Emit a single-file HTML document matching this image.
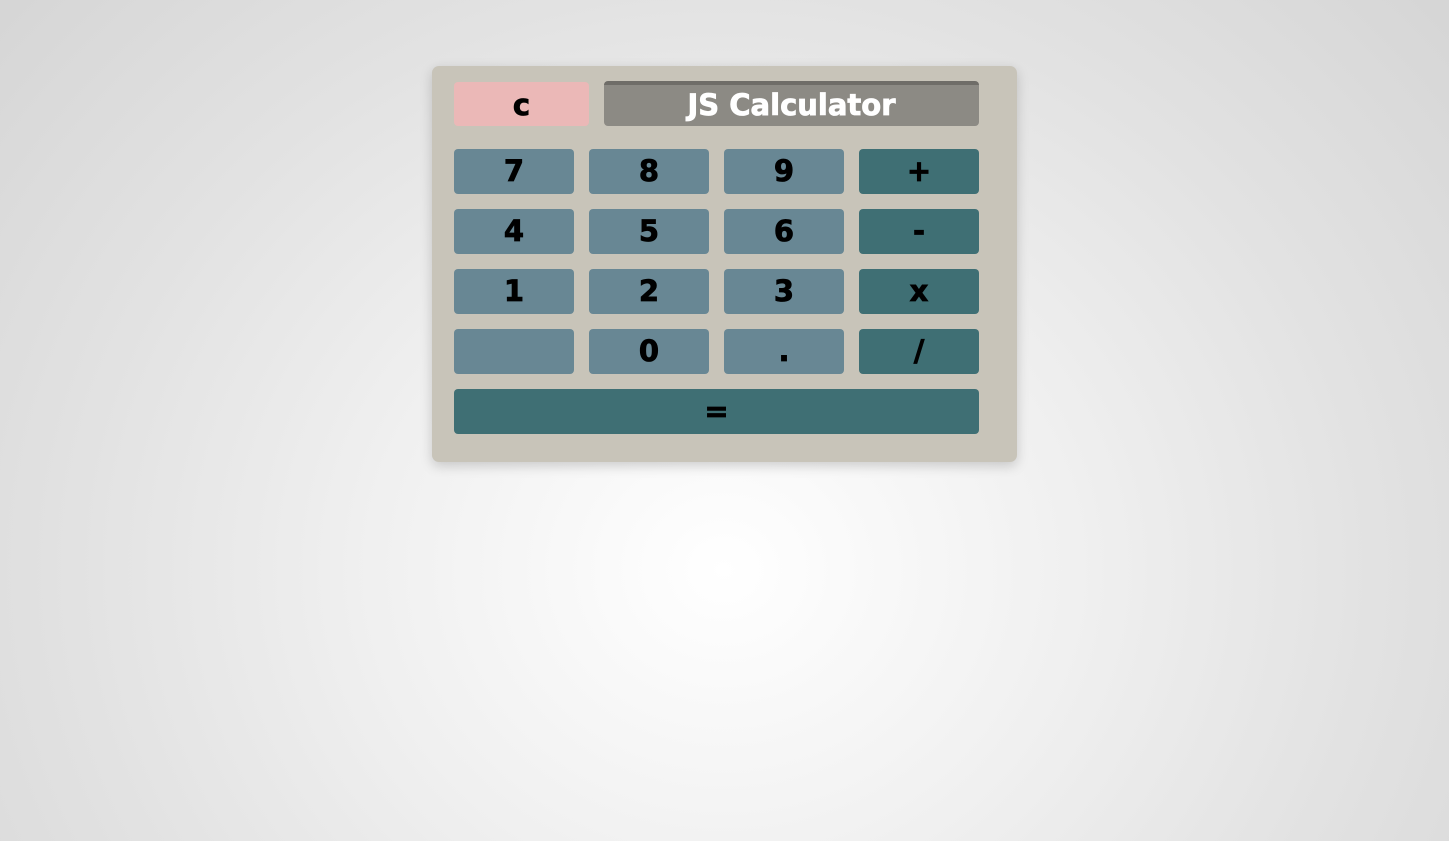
<!DOCTYPE html>
<html><head><style>
html,body{margin:0;width:1449px;height:841px;overflow:hidden}
body{background:radial-gradient(ellipse 1000px 900px at 724px 570px,#fff 0%,#f0f0f0 35%,#e2e2e2 65%,#d4d4d4 100%);font-family:"DejaVu Sans","Liberation Sans",sans-serif;font-weight:bold}
.p{position:absolute;left:432px;top:66px;width:585px;height:396px;background:#c8c4b9;border-radius:7px;box-shadow:0 4px 12px rgba(0,0,0,.18)}
.b{position:absolute;width:120px;height:45px;border-radius:4px;background:#688794;color:#000;font-size:29px;line-height:45px;text-align:center;-webkit-text-stroke:0.8px currentColor}
.o{background:#3f6f74}
</style></head><body>
<div class="p"></div>
<div class="b" style="left:454px;top:82px;width:135px;height:44px;line-height:46px;background:#ebb8b7">c</div>
<div class="b" style="left:604px;top:81px;width:375px;height:41px;border-top:4px solid #6f6d68;background:#8c8a84;color:#fff;line-height:40px">JS Calculator</div>
<div class="b" style="left:454px;top:149px">7</div>
<div class="b" style="left:589px;top:149px">8</div>
<div class="b" style="left:724px;top:149px">9</div>
<div class="b o" style="left:859px;top:149px">+</div>
<div class="b" style="left:454px;top:209px">4</div>
<div class="b" style="left:589px;top:209px">5</div>
<div class="b" style="left:724px;top:209px">6</div>
<div class="b o" style="left:859px;top:209px">-</div>
<div class="b" style="left:454px;top:269px">1</div>
<div class="b" style="left:589px;top:269px">2</div>
<div class="b" style="left:724px;top:269px">3</div>
<div class="b o" style="left:859px;top:269px">x</div>
<div class="b" style="left:454px;top:329px"></div>
<div class="b" style="left:589px;top:329px">0</div>
<div class="b" style="left:724px;top:329px">.</div>
<div class="b o" style="left:859px;top:329px">/</div>
<div class="b o" style="left:454px;top:389px;width:525px">=</div>
</body></html>
